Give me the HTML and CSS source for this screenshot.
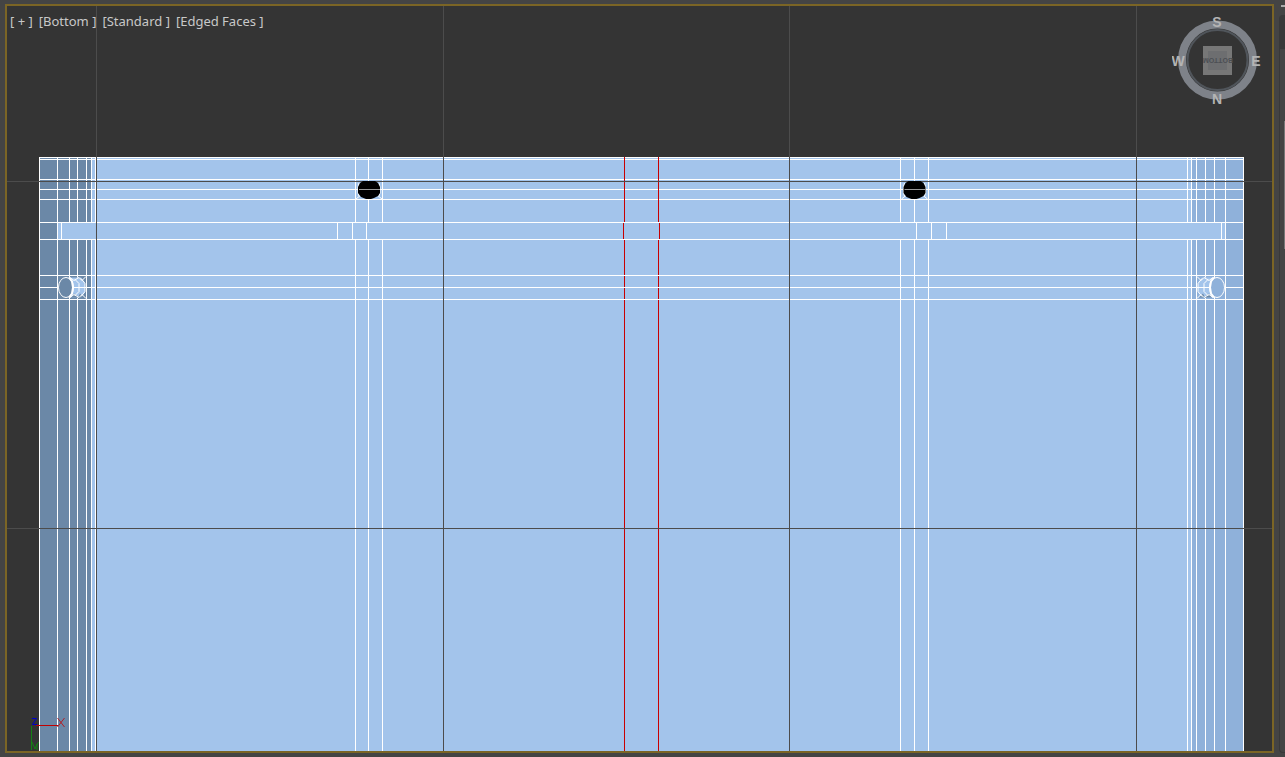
FILE: index.html
```html
<!DOCTYPE html>
<html lang="en">
<head>
<meta charset="utf-8">
<title>Bottom viewport</title>
<link rel="stylesheet" href="styles.css">
</head>
<body>
<div class="app">
<main class="viewport">
<svg class="scene" viewBox="7 6 1265 745" preserveAspectRatio="xMinYMin slice" role="img" aria-label="Model seen from the bottom with edged faces">
<g shape-rendering="crispEdges">
<path class="grid" d="M96.500 6V751M443.500 6V751M789.500 6V751M1136.500 6V751M7 181.500H1272M7 528.500H1272"/>
<rect class="face" x="39" y="157" width="1205" height="594"/>
<rect class="face-dark" x="39" y="157" width="52" height="594"/>
<rect class="face-side" x="1191" y="157" width="53" height="594"/>
<path class="edge" d="M57.500 157V751M69.500 157V751M77.500 157V751M86.500 157V751M91.500 157V751M95.500 157V751M355.500 157V751M368.500 157V751M382.500 157V751M900.500 157V751M914.500 157V751M928.500 157V751M1187.500 157V751M1191.500 157V751M1196.500 157V751M1205.500 157V751M1214.500 157V751M1225.500 157V751"/>
<path class="red" d="M624.500 157V751M658.500 157V751"/>
<rect class="face" x="58" y="223" width="1167" height="16"/>
<path class="edge" d="M39.500 751V157.500H1243.500V751M39 159.500H1244M39 179.500H1244M39 189.500H1244M39 199.500H1244M39 222.500H1244M39 239.500H1244M39 275.500H1244M39 287.500H1244M39 299.500H1244M57.500 223V239M61.500 223V239M337.500 223V239M352.500 223V239M366.500 223V239M916.500 223V239M931.500 223V239M946.500 223V239M1221.500 223V239M1225.500 223V239"/>
<path class="red" d="M623.500 223V239M659.500 223V239M624.500 157V222M658.500 157V222"/>
<path class="grid" d="M96.500 157V751M443.500 157V751M789.500 157V751M1136.500 157V751M39 181.500H1244M39 528.500H1244"/>
</g>
<defs>
<g id="hole">
<path class="edge" d="M-13 9L-8 5M13 9L8 5M-10-7L-11-3V3L-10 6M10-7L11-3V3L10 6"/>
<path class="hole-fill" d="M-6-9H6L9-7L11-3V3L9 6L5 8L2 9H-3L-8 7L-11 3V-3L-9-7Z"/>
<path class="hole-line" d="M-10-.5H11"/>
</g>
<g id="dowel">
<path class="face" d="M3-10H15L19-5V5L15 10H3Z"/>
<path class="dowel-shade" d="M8 6L13 10H5ZM14 6L18 10H12Z"/>
<path class="edge" d="M4-10L8-7L13-10L16-7L20-11M4 10L8 7L13 10L16 7L20 11M9-8L13-4V4L9 8M15-9L19-4V4L15 9M6 0H19"/>
<ellipse class="dowel-face" rx="7.500" ry="10"/>
<path class="dowel-rim" d="M3-10L6-6L7 0L6 6L3 10"/>
</g>
</defs>
<use href="#hole" x="369" y="190"/>
<use href="#hole" x="914.500" y="190"/>
<use class="left-dowel" href="#dowel" transform="translate(66 287.500)"/>
<use class="right-dowel" href="#dowel" transform="translate(1217 287.500) scale(-1 1)"/>
<g shape-rendering="crispEdges">
<path class="axis-x" d="M36 725.500H58"/><path class="axis-y" d="M31.500 726V750"/>
</g>
<path class="axis-z" d="M32 718.500H36.500L32.500 724.500H37"/>
<path class="axis-x-letter" d="M57.500 718L64.500 727M64.500 718L57.500 727"/>
<path class="axis-y-letter" d="M32 742L35 749L37 744L39 742M37 744V750"/>
</svg>
<nav class="labels" aria-label="Viewport label menus">
<button type="button">[ + ]</button><button type="button">[Bottom ]</button><button type="button">[Standard ]</button><button type="button">[Edged Faces ]</button>
</nav>
<svg class="cube" viewBox="0 0 92 96" role="img" aria-label="View cube, bottom">
<circle class="ring" cx="45.500" cy="48" r="35.500"/>
<circle class="ring-inner" cx="45.500" cy="48" r="30"/>
<rect class="cube-face" x="31" y="34" width="29" height="29"/>
<rect class="cube-center" x="36" y="39" width="19" height="19"/>
<text class="cube-text" transform="rotate(180 45.500 48)" x="45" y="50">BOTTOM</text>
<text class="compass" x="45" y="15">S</text><text class="compass" x="6" y="54">W</text><text class="compass" x="84" y="54">E</text><text class="compass" x="45" y="92">N</text>
</svg>
</main>
<aside class="rail"><div class="grip"></div><div class="panel"><div class="panel-head"></div><div class="thumb"></div></div></aside>
</div>
</body>
</html>
```
FILE: styles.css
```css
*{box-sizing:border-box}
body{margin:0;background:#444;font-family:"Noto Sans","Open Sans",sans-serif}
.app{display:flex;height:100vh;padding-left:5px}
.viewport{position:relative;flex:1;min-width:0;margin:4px 0;border:2px solid #7b6525;background:#343434}
.scene{display:block;width:100%;height:100%}
.scene path{fill:none}
.grid{stroke:#4c4c4c}
.scene .face{fill:#a3c4eb}
.face-dark{fill:#6b88a7}
.face-side{fill:#8fb1da}
.edge{stroke:#fff}
.red{stroke:#c80000}
.scene .hole-fill{fill:#000}
.hole-line{stroke:#999}
.left-dowel{--dowel:#6b88a7}
.right-dowel{--dowel:#8fb1da}
.dowel-face{fill:var(--dowel);stroke:#fff}
.scene .dowel-shade{fill:#6b88a7}
.dowel-rim{stroke:#fff;stroke-width:2}
.axis-x{stroke:#c00000}
.axis-y,.axis-y-letter{stroke:#148014}
.axis-z{stroke:#0000c8}
.axis-x-letter{stroke:#b02028}
.labels{position:absolute;left:3px;top:5px;display:flex;gap:6px}
.labels button{padding:0;border:0;background:none;color:#c8c8c8;font:13px/20px "Noto Sans","Open Sans",sans-serif;white-space:pre}
.cube{position:absolute;right:8px;top:6px;width:92px;height:96px}
.ring{fill:none;stroke:#7e8289;stroke-width:8}
.ring-inner{fill:none;stroke:#50555b;stroke-width:2}
.cube-face{fill:#777}
.cube-center{fill:#6d6e70}
.cube-text{font:700 7px "Liberation Sans",sans-serif;text-anchor:middle;fill:#4c4f54}
.compass{font:700 14px "Liberation Sans",sans-serif;text-anchor:middle;fill:#b4b4b4}
.rail{display:flex;flex-direction:column;width:11px;padding:5px 0 4px 5px}
.grip{height:10px;margin-left:2px;border-top:2px dotted #aaa}
.panel{flex:1;border:1px solid #393939;border-right:0;border-radius:4px 0 0 4px}
.panel-head{height:33px;background:#393939}
.thumb{height:128px;margin:72px 0 0 4px;background:#777}
```
